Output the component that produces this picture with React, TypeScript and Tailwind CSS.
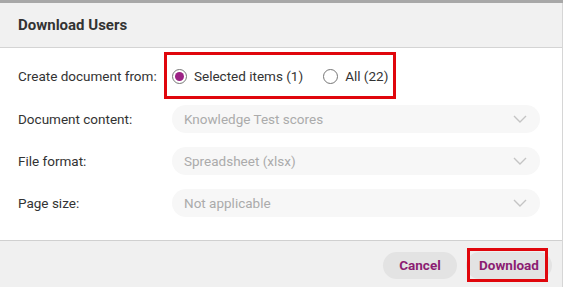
import React from "react";

function Chevron() {
  return (
    <svg width="14" height="8" viewBox="0 0 14 8" fill="none">
      <path d="M1 1L7 7L13 1" stroke="#c4c4c4" strokeWidth="1.4" />
    </svg>
  );
}

function SelectBox({ value }: { value: string }) {
  return (
    <div className="flex h-[28px] w-[368px] shrink-0 items-center justify-between rounded-full bg-[#f7f7f7] pl-[12px] pr-[13px]">
      <span className="whitespace-nowrap text-[13.5px] text-[#ababab]">{value}</span>
      <Chevron />
    </div>
  );
}

function Radio({ checked }: { checked?: boolean }) {
  return (
    <span className="flex h-[15px] w-[15px] shrink-0 items-center justify-center rounded-full border border-[#767676] bg-white">
      {checked && <span className="h-[9px] w-[9px] rounded-full bg-[#9c2285]" />}
    </span>
  );
}

export default function App() {
  return (
    <div
      className="h-[287px] w-[563px] overflow-hidden bg-white text-[#333]"
      style={{ fontFamily: "Roboto, 'Liberation Sans', sans-serif" }}
    >
      <div className="h-[3px] bg-[#a8a8a8]" />
      <div className="flex h-[284px] flex-col border-r border-[#d6d6d6]">
        <div className="flex h-[45px] shrink-0 items-center border-b border-[#d4d4d4] bg-[#f1f1f1] px-[18px]">
          <span className="text-[15px] font-bold text-[#333]">Download Users</span>
        </div>
        <div className="flex flex-1 flex-col px-[18px] pt-[4px]">
          <div className="flex h-[47px] items-center">
            <span className="w-[146px] shrink-0 whitespace-nowrap pt-[2px] text-[13.5px]">Create document from:</span>
            <div className="flex h-[47px] w-[232px] shrink-0 items-center whitespace-nowrap border-[3px] border-[#e0060c] pl-[5px] pt-[2px]">
              <Radio checked />
              <span className="ml-[7px] text-[13.5px]">Selected items (1)</span>
              <span className="ml-[20px] flex">
                <Radio />
              </span>
              <span className="ml-[7px] text-[13.5px]">All (22)</span>
            </div>
          </div>
          <div className="mt-[6px] flex items-center">
            <span className="w-[154px] shrink-0 whitespace-nowrap text-[13.5px]">Document content:</span>
            <SelectBox value="Knowledge Test scores" />
          </div>
          <div className="mt-[14px] flex items-center">
            <span className="w-[154px] shrink-0 whitespace-nowrap text-[13.5px]">File format:</span>
            <SelectBox value="Spreadsheet (xlsx)" />
          </div>
          <div className="mt-[14px] flex items-center">
            <span className="w-[154px] shrink-0 whitespace-nowrap text-[13.5px]">Page size:</span>
            <SelectBox value="Not applicable" />
          </div>
        </div>
        <div className="flex h-[47px] shrink-0 items-center justify-end gap-[9px] border-t border-[#d0d0d0] bg-[#f0f0f0] pr-[10px] pt-[2px]">
          <button className="flex h-[27px] w-[74px] items-center justify-center rounded-full bg-[#e3e3e3] text-[13.5px] font-bold text-[#8c1d72]">
            Cancel
          </button>
          <div className="relative flex h-[27px] w-[86px] items-center justify-center rounded-full bg-[#e3e3e3]">
            <span className="text-[13.5px] font-bold text-[#8c1d72]">Download</span>
            <div className="absolute left-[1px] top-[-4px] h-[34px] w-[81px] border-[3px] border-[#e0060c]" />
          </div>
        </div>
      </div>
    </div>
  );
}
